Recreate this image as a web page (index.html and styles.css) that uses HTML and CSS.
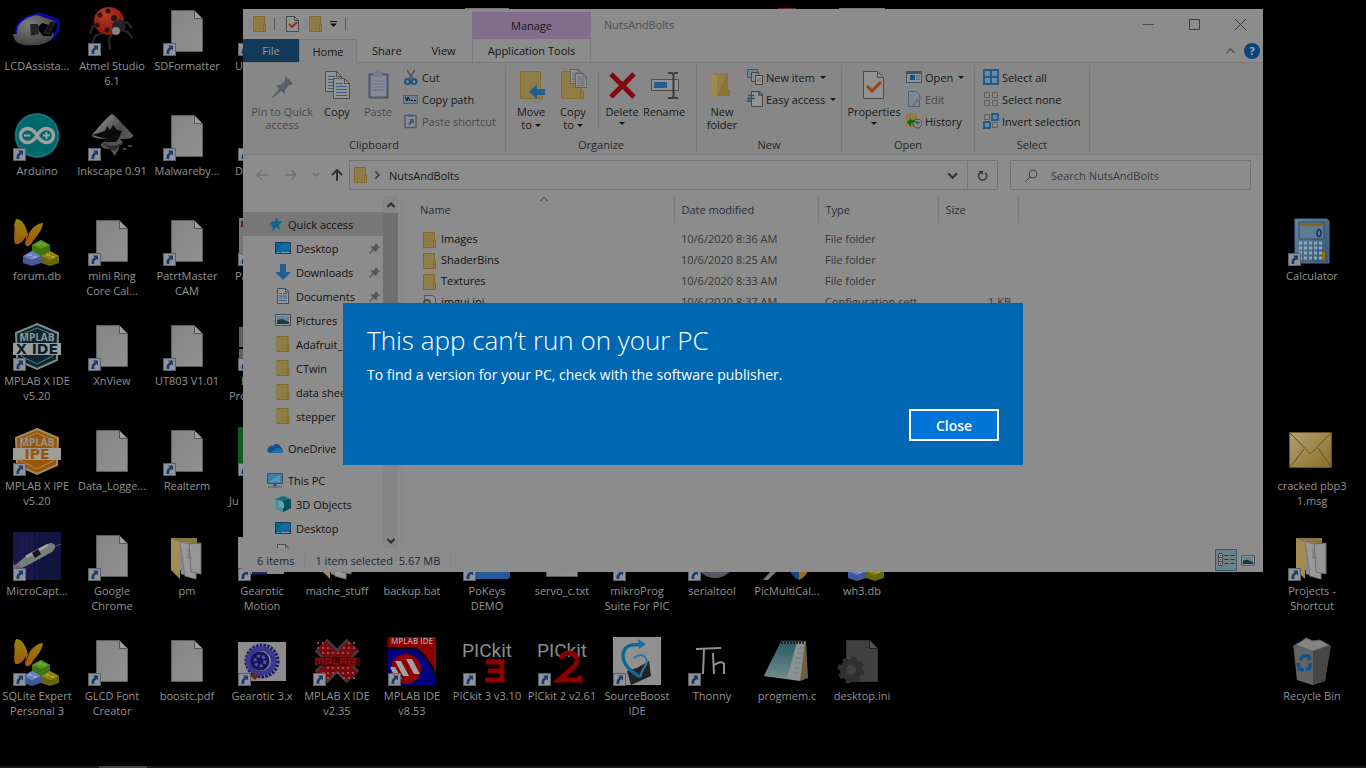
FILE: index.html
```html
<!DOCTYPE html>
<html lang="en">
<head>
<meta charset="utf-8">
<title>Desktop</title>
<link rel="stylesheet" href="styles.css">
</head>
<body>
<svg class="defs" aria-hidden="true">
  <defs>
    <linearGradient id="g-paper" x1="0" y1="0" x2="1" y2="1"><stop offset="0" stop-color="#848484"/><stop offset="1" stop-color="#919191"/></linearGradient>
    <linearGradient id="g-wing" x1="0" y1="0" x2="0" y2="1"><stop offset="0" stop-color="#94860a"/><stop offset="1" stop-color="#a35410"/></linearGradient>
    <linearGradient id="g-ink" x1="0" y1="0" x2="1" y2="1"><stop offset="0" stop-color="#a0a0a0"/><stop offset=".5" stop-color="#4a4a4c"/><stop offset="1" stop-color="#6c7078"/></linearGradient>
    <linearGradient id="g-mail" x1="0" y1="0" x2="1" y2="1"><stop offset="0" stop-color="#b0a274"/><stop offset="1" stop-color="#8a6d25"/></linearGradient>
    <linearGradient id="g-calc" x1="0" y1="0" x2="1" y2="1"><stop offset="0" stop-color="#6888a4"/><stop offset="1" stop-color="#305474"/></linearGradient>
    <linearGradient id="g-note" x1="0" y1="0" x2="0" y2="1"><stop offset="0" stop-color="#2b5a61"/><stop offset="1" stop-color="#6d8b8e"/></linearGradient>
    <radialGradient id="g-bug" cx=".4" cy=".3" r=".8"><stop offset="0" stop-color="#b53a26"/><stop offset="1" stop-color="#7a1408"/></radialGradient>
    <radialGradient id="g-hand" cx=".4" cy=".3" r=".8"><stop offset="0" stop-color="#7c7c7c"/><stop offset="1" stop-color="#3c3c3c"/></radialGradient>
  </defs>
  <symbol id="arrow" viewBox="0 0 13 13"><path d="M0 0h13v13H0z" fill="#5c6066"/><path d="M1 1h11v11H1z" fill="#90949a"/><path d="M5 2.500h5v5l-1.600-1.600C6.600 7 6 8.600 6.400 11H3.600C3 8 4.200 5.800 6.600 4.200z" fill="#1c3a6c"/></symbol>
  <symbol id="doc" viewBox="0 0 48 48"><path d="M8.500 2.500h23l8 8v33h-31z" fill="url(#g-paper)" stroke="#5e5e5e"/><path d="M31.500 2.500v8h8z" fill="#a0a0a0" stroke="#555"/></symbol>
  <symbol id="butterfly" viewBox="0 0 48 48">
    <path d="M3 1C9 0 14 10 15 17c3-6 9-12 15-12-1 8-7 14-10 18-2 4-6 8-8 3l1-8c-2 4-6 9-10 8C-1 25 3 12 1 7z" fill="url(#g-wing)"/><path d="M16 15l-3 8" stroke="#3c2a10"/>
    <path d="M19 27l9-5 9 5v7l-9 4-9-4z" fill="#3d7410"/><path d="M19 27l9-5 9 5-9 4z" fill="#559522"/><path d="M24 25l3-1 3 1v2h-6zM29 28h4v-2h-4z" fill="#6aa83a"/>
    <path d="M10 38l9-5 9 5v7l-9 3-9-3z" fill="#43579b"/><path d="M10 38l9-5 9 5-9 4z" fill="#6c82bf"/><path d="M15 36h4v2h-4zM20 38h4v2h-4z" fill="#8da0d4"/>
    <path d="M28 38l9-5 9 5v7l-9 3-9-3z" fill="#6a6408"/><path d="M28 38l9-5 9 5-9 4z" fill="#8d850e"/><path d="M33 36h4v2h-4zM38 38h4v2h-4z" fill="#aaa035"/>
  </symbol>
  <symbol id="folder" viewBox="0 0 13 16"><path d="M.5.500h11v15H.500z" fill="#8f7c46" stroke="#836b26"/><path d="M10.500 8.500h2v7h-2z" fill="#947f3c" stroke="#836b26"/></symbol>
  <symbol id="open-folder" viewBox="0 0 48 48"><path d="M8 5h26v32H8z" fill="#8b7641"/><path d="M14 8l14 2v34l-10-3z" fill="#8a8a8a"/><path d="M17 9l16 3v34l-11-3z" fill="#999" stroke="#777"/><path d="M26 11l12-1v31l-10-2z" fill="#969696" stroke="#6c6c6c"/><path d="M8 5l9 5v36L8 37z" fill="#a18c52"/><path d="M25 15v10M24 25h5" stroke="#777"/></symbol>
  <symbol id="pin" viewBox="0 0 12 12"><path d="M7 0l5 5-1.500.5-2 2L8 10.500 5 8 1 12l-1-1 4-4-2.500-3L5 3.500l2-2z" fill="#50565e"/></symbol>
  <symbol id="monitor" viewBox="0 0 16 12"><path d="M.5.500h15v11H.500z" fill="#08629b" stroke="#153e5c"/><path d="M1 9l8-8h6v8z" fill="#14699f"/><path d="M2 10.500h2M6 10.500h8" stroke="#72a4c6"/></symbol>
  <symbol id="textdoc" viewBox="0 0 12 16"><path d="M.5.500h8l3 3v12H.500z" fill="#989898" stroke="#454d55"/><path d="M8.500 1v3h3" fill="none" stroke="#454d55"/><path d="M2 5.500h3M6 5.500h4M2 8h8M2 10h3M6 10h4M2 12.500h8" stroke="#27618c"/></symbol>
  <symbol id="picture" viewBox="0 0 16 12"><path d="M.5.500h15v11H.500z" fill="#979797" stroke="#4a4a4a"/><path d="M2 2h12v8H2z" fill="#62849c"/><path d="M2 6l5-1 7 3v2H2z" fill="#153d3f"/></symbol>
  <symbol id="bigfolder" viewBox="0 0 24 30"><path d="M.5.500h20v27H.500z" fill="#8f7c46" stroke="#866c25"/><path d="M19.500 20h3v8h-3z" fill="#947f3c" stroke="#866c25"/></symbol>
  <symbol id="lines" viewBox="0 0 17 21"><path d="M.5.500h11l5 5v15H.500z" fill="#939393" stroke="#4c4c4c"/><path d="M11.500.500v5h5" fill="none" stroke="#4c4c4c"/><path d="M3 5.500h7M3 8.500h11M3 11.500h11M3 14.500h11M3 17.500h11" stroke="#3c5c88"/></symbol>
</svg>

<main class="desktop" aria-label="Desktop">
  <div class="icon-row">
    <figure class="icon"><svg viewBox="0 0 48 48"><path d="M4 26C2 14 12 9 27 6l17 6c4 8-1 17-9 20-9 5-28 7-31-6z" fill="none" stroke="#0808a8" stroke-width="3"/><path d="M4 26C3 16 12 9 24 7l18 6-3 5-10-3-5 5 6 8h8l2-4 1 3c-4 8-12 10-20 10-10 1-20 0-21-11z" fill="url(#g-hand)"/><path d="M17 16h8l1 10-8 2z" fill="#242424"/><path d="M31 25l6-11 6-1-7 13z" fill="#151515" stroke="#444" stroke-width=".5"/></svg><figcaption>LCDAssista...</figcaption></figure>
    <figure class="icon"><svg viewBox="0 0 48 48"><path d="M12 20L5 18l-3 8M16 24l-9 4-3 9M25 24l-4 7 1 11M33 17l6-3 5 6M32 22l8 2 4 6" fill="none" stroke="#292929" stroke-width="2"/><ellipse cx="21" cy="13" rx="15" ry="14" fill="url(#g-bug)"/><g fill="#301010"><circle cx="20" cy="3" r="2.500"/><circle cx="12" cy="7" r="2.500"/><circle cx="9" cy="17" r="2.500"/><circle cx="26" cy="10" r="3"/><circle cx="19" cy="22" r="2.500"/></g><ellipse cx="31" cy="18" rx="7" ry="6" fill="#252527"/><circle cx="28" cy="23" r="4" fill="#858585"/></svg><svg class="badge"><use href="#arrow"/></svg><figcaption>Atmel Studio 6.1</figcaption></figure>
    <figure class="icon"><svg><use href="#doc"/></svg><svg class="badge"><use href="#arrow"/></svg><figcaption>SDFormatter</figcaption></figure>
    <figure class="icon cut"><svg></svg><svg class="badge"><use href="#arrow"/></svg><figcaption>U</figcaption></figure>
    <figure class="icon"></figure>
    <figure class="icon"></figure>
    <figure class="icon"><svg viewBox="0 0 48 48"><path d="M2 0h44v12H2z" fill="#777"/></svg></figure>
    <figure class="icon"></figure>
    <figure class="icon"></figure>
    <figure class="icon"></figure>
    <figure class="icon"><svg viewBox="0 0 48 48"><path d="M15 0h18v12H15z" fill="#64281c"/></svg></figure>
    <figure class="icon"><svg viewBox="0 0 48 48"><path d="M1 0h46v12H1z" fill="#777"/></svg></figure>
  </div>
  <div class="icon-row">
    <figure class="icon"><svg viewBox="0 0 48 48"><circle cx="24" cy="22.500" r="22.500" fill="#02686c"/><circle cx="24" cy="22.500" r="21" fill="none" stroke="#257e80"/><path d="M24 22.500c-4-7-8-7-9.500-7a7 7 0 0 0 0 14c1.500 0 5.500 0 9.500-7zm0 0c4 7 8 7 9.500 7a7 7 0 0 0 0-14c-1.500 0-5.500 0-9.500 7z" fill="none" stroke="#a0a0a0" stroke-width="3.500"/><path d="M11 22.500h6M30 22.500h7M33.500 19v7" stroke="#a0a0a0" stroke-width="2"/></svg><svg class="badge"><use href="#arrow"/></svg><figcaption>Arduino</figcaption></figure>
    <figure class="icon"><svg viewBox="0 0 48 48"><path d="M24 1c2 0 18 18 21 21 1 3-5 4-12 4-3 1 4 2 1 5-2 2-4 2-3 5-2 2-3 4-4 7l-5-7c-6 0-10-2-9-5l6-5c-8 0-15-1-15-4C8 17 20 3 24 1z" fill="url(#g-ink)"/><path d="M4 22l13-4 2-5 3 4 3-5 4 5 5 1-3 7-3 4H16l3-3z" fill="#0c0c0c"/><path d="M14 30c8 4 14 3 20 0l-7 8-5-2z" fill="#2c2c2e"/><path d="M40 33h4M35 36h3" stroke="#444" stroke-width="2"/></svg><svg class="badge"><use href="#arrow"/></svg><figcaption>Inkscape 0.91</figcaption></figure>
    <figure class="icon"><svg><use href="#doc"/></svg><svg class="badge"><use href="#arrow"/></svg><figcaption>Malwareby...</figcaption></figure>
    <figure class="icon cut"><svg></svg><svg class="badge"><use href="#arrow"/></svg><figcaption>D</figcaption></figure>
  </div>
  <div class="icon-row">
    <figure class="icon"><svg><use href="#butterfly"/></svg><figcaption>forum.db</figcaption></figure>
    <figure class="icon"><svg><use href="#doc"/></svg><svg class="badge"><use href="#arrow"/></svg><figcaption>mini Ring<br>Core Cal...</figcaption></figure>
    <figure class="icon"><svg><use href="#doc"/></svg><svg class="badge"><use href="#arrow"/></svg><figcaption>PatrtMaster CAM</figcaption></figure>
    <figure class="icon cut"><svg viewBox="0 0 48 48"><path d="M1 0h40v46H1z" fill="#777"/><path d="M3 3h20v6H3z" fill="#701438"/></svg><svg class="badge"><use href="#arrow"/></svg><figcaption>Pa</figcaption></figure>
    <figure class="icon side"><svg viewBox="0 0 48 48"><path d="M7 1h32l2 2v42H9l-2-2z" fill="url(#g-calc)" stroke="#54718a"/><path d="M11 4h25v17H11z" fill="#5e7d95" stroke="#2e4b68"/><path d="M12 5h23v3H12z" fill="#995f10"/><path d="M11 25h25M11 30h25M11 35h25M11 40h25" stroke="#8fa4b4" stroke-width="3" stroke-dasharray="3 2"/><path d="M34 34h3v8h-3z" fill="#a8650c"/><ellipse cx="31" cy="15" rx="2" ry="3.500" fill="none" stroke="#182b58" stroke-width="1.500"/></svg><svg class="badge"><use href="#arrow"/></svg><figcaption>Calculator</figcaption></figure>
  </div>
  <div class="icon-row">
    <figure class="icon"><svg viewBox="0 0 48 48" class="logo"><path d="M24 1l21 9-1 27-20 9-20-9L3 10z" fill="#0a2730" stroke="#7f8a8d" stroke-width="2"/><path d="M24 5l16 7v21l-16 8-16-8V12z" fill="none" stroke="#66777c"/><path d="M0 20h48v12H0z" fill="#9b9e9f"/><text x="24" y="18" class="logo-s">MPLAB</text><text x="24" y="31" class="logo-d" fill="#0a2028">X IDE</text></svg><svg class="badge"><use href="#arrow"/></svg><figcaption>MPLAB X IDE v5.20</figcaption></figure>
    <figure class="icon"><svg><use href="#doc"/></svg><svg class="badge"><use href="#arrow"/></svg><figcaption>XnView</figcaption></figure>
    <figure class="icon"><svg><use href="#doc"/></svg><svg class="badge"><use href="#arrow"/></svg><figcaption>UT803 V1.01</figcaption></figure>
    <figure class="icon cut deep"><svg viewBox="0 0 48 48"><path d="M1 4h40v20H1zM1 26h40v14H1z" fill="#606060"/></svg><svg class="badge"><use href="#arrow"/></svg><figcaption><span>N</span><br>Pro</figcaption></figure>
  </div>
  <div class="icon-row">
    <figure class="icon"><svg viewBox="0 0 48 48" class="logo"><path d="M24 1l21 9-1 27-20 9-20-9L3 10z" fill="#9a5806" stroke="#a38960" stroke-width="2"/><path d="M24 5l16 7v21l-16 8-16-8V12z" fill="none" stroke="#a98d66"/><path d="M0 20h48v12H0z" fill="#a09d98"/><text x="24" y="18" class="logo-s">MPLAB</text><text x="24" y="31" class="logo-d" fill="#995606">IPE</text></svg><svg class="badge"><use href="#arrow"/></svg><figcaption>MPLAB X IPE v5.20</figcaption></figure>
    <figure class="icon"><svg><use href="#doc"/></svg><figcaption>Data_Logge...</figcaption></figure>
    <figure class="icon"><svg><use href="#doc"/></svg><svg class="badge"><use href="#arrow"/></svg><figcaption>Realterm</figcaption></figure>
    <figure class="icon cut deep"><svg viewBox="0 0 48 48"><path d="M0-1h48v48H0z" fill="#135c1c"/></svg><svg class="badge"><use href="#arrow"/></svg><figcaption><br>Ju</figcaption></figure>
    <figure class="icon side"><svg viewBox="0 0 48 48"><path d="M1.500 4.500h42v35h-42z" fill="url(#g-mail)" stroke="#63522b"/><path d="M2 5l20.500 21L43 5M2 39l14-18M43 39L30 20" fill="none" stroke="#65512a"/></svg><figcaption>cracked pbp3 1.msg</figcaption></figure>
  </div>
  <div class="icon-row">
    <figure class="icon"><svg viewBox="0 0 48 48"><path d="M0-1h48v48H0z" fill="#101540"/><path d="M0 0h20v47H0z" fill="#1d1648"/><path d="M9 0v47M14 0v47M19 0v47M24 0v47" stroke="#211f59"/><path d="M0 34l13-11L37 10q6 0 5 5l-3 4-22 12-10 5z" fill="#777d7d"/><path d="M13 24l22-12" stroke="#a0a0a0" stroke-width="3"/><path d="M19 20l6-4 3 5-6 4z" fill="#1d1110"/><path d="M42 13l6-2" stroke="#555"/><path d="M0 31l10 3-8 5H0z" fill="#765e75"/></svg><svg class="badge"><use href="#arrow"/></svg><figcaption>MicroCapt...</figcaption></figure>
    <figure class="icon"><svg><use href="#doc"/></svg><svg class="badge"><use href="#arrow"/></svg><figcaption>Google Chrome</figcaption></figure>
    <figure class="icon"><svg><use href="#open-folder"/></svg><figcaption>pm</figcaption></figure>
    <figure class="icon"><svg viewBox="0 0 48 48"><path d="M0 4h46v37H0z" fill="#8c8c8c"/><path d="M14 40h15" stroke="#222460" stroke-width="3"/></svg><svg class="badge"><use href="#arrow"/></svg><figcaption>Gearotic Motion</figcaption></figure>
    <figure class="icon"><svg><use href="#open-folder"/></svg><figcaption>mache_stuff</figcaption></figure>
    <figure class="icon"><svg></svg><figcaption>backup.bat</figcaption></figure>
    <figure class="icon"><svg viewBox="0 0 48 48"><rect x="1" y="20" width="46" height="26" rx="3" fill="#245b96"/></svg><svg class="badge"><use href="#arrow"/></svg><figcaption>PoKeys<br>DEMO</figcaption></figure>
    <figure class="icon"><svg><use href="#doc"/></svg><figcaption>servo_c.txt</figcaption></figure>
    <figure class="icon"><svg></svg><svg class="badge"><use href="#arrow"/></svg><figcaption>mikroProg Suite For PIC</figcaption></figure>
    <figure class="icon"><svg viewBox="0 0 48 48"><circle cx="27" cy="25" r="20" fill="#555966"/></svg><svg class="badge"><use href="#arrow"/></svg><figcaption>serialtool</figcaption></figure>
    <figure class="icon"><svg viewBox="0 0 48 48"><path d="M0 47l14-16h7L5 47z" fill="#777"/><path d="M26 34h10v13q-8-3-10-13z" fill="#174986"/><path d="M36 34h10q-2 10-10 13z" fill="#9b7210"/></svg><figcaption>PicMultiCal...</figcaption></figure>
    <figure class="icon"><svg><use href="#butterfly"/></svg><figcaption>wh3.db</figcaption></figure>
    <figure class="icon side"><svg><use href="#open-folder"/></svg><svg class="badge"><use href="#arrow"/></svg><figcaption>Projects - Shortcut</figcaption></figure>
  </div>
  <div class="icon-row">
    <figure class="icon"><svg><use href="#butterfly"/></svg><svg class="badge"><use href="#arrow"/></svg><figcaption>SQLite Expert Personal 3</figcaption></figure>
    <figure class="icon"><svg><use href="#doc"/></svg><svg class="badge"><use href="#arrow"/></svg><figcaption>GLCD Font Creator</figcaption></figure>
    <figure class="icon"><svg><use href="#doc"/></svg><figcaption>boostc.pdf</figcaption></figure>
    <figure class="icon"><svg viewBox="0 0 48 48"><path d="M0 4h48v39H0z" fill="#8c8c8c"/><circle cx="24" cy="23" r="15.500" fill="none" stroke="#191b6c" stroke-width="4" stroke-dasharray="2.500 1.200"/><circle cx="23" cy="23" r="12.500" fill="none" stroke="#38398c" stroke-width="5"/><circle cx="22" cy="23" r="9.500" fill="#12145c"/><circle cx="22" cy="23" r="5" fill="none" stroke="#5455a0" stroke-width="3" stroke-dasharray="3 2"/><path d="M12 38l4-3 5 3-4 4z" fill="#6d2a14"/></svg><svg class="badge"><use href="#arrow"/></svg><figcaption>Gearotic 3.x</figcaption></figure>
    <figure class="icon"><svg viewBox="0 0 48 48"><g fill="none" stroke-linejoin="round"><path d="M8 7l32 32M40 7L8 39" stroke="#3e3e3e" stroke-width="18"/><path d="M8 7l32 32M40 7L8 39" stroke="#730d12" stroke-width="13"/><g stroke="#a8434a" stroke-width="2" stroke-dasharray="2 3"><path d="M4 5h9M35 5h9M4 10h14M30 10h14M9 15h30M14 30h22M9 35h32M4 40h14M30 40h14"/></g></g><path d="M2 19h45v9H2z" fill="#430407"/><path d="M3 27v-6h7v6M6.500 21v5M13 27v-6h5v4h-4M21 21v5h5M28 27v-6h5v6M28 24h5M36 21v6h6v-6zM36 24h6" fill="none" stroke="#900f12" stroke-width="1.500"/></svg><svg class="badge"><use href="#arrow"/></svg><figcaption>MPLAB X IDE v2.35</figcaption></figure>
    <figure class="icon"><svg viewBox="0 0 48 48" class="logo"><path d="M0-1h48v48H0z" fill="#8c0000"/><path d="M0 10h27c8 4 16 15 21 28v9H0z" fill="#00007f"/><path d="M0 10h28q13 9 20 28" fill="none" stroke="#080808" stroke-width="2"/><circle cx="18" cy="31" r="15" fill="#8c0000"/><path d="M7 23h6l8 15h-6zM18 21h6l8 15h-6zM2 29h5l7 12H8z" fill="#a0a0a0"/><text x="24" y="6" class="logo-p">MPLAB IDE</text></svg><svg class="badge"><use href="#arrow"/></svg><figcaption>MPLAB IDE v8.53</figcaption></figure>
    <figure class="icon"><svg viewBox="0 0 48 48" class="logo"><text x="24" y="19" class="logo-k">PICkit</text><path d="M23 24h16v18H22M25 33h14" fill="none" stroke="#8c0000" stroke-width="5"/></svg><svg class="badge"><use href="#arrow"/></svg><figcaption>PICkit 3 v3.10</figcaption></figure>
    <figure class="icon"><svg viewBox="0 0 48 48" class="logo"><text x="24" y="19" class="logo-k">PICkit</text><path d="M23 21q2-6 9-6 11 3 5 13L21 42h21v-4" fill="none" stroke="#8c0000" stroke-width="5"/></svg><svg class="badge"><use href="#arrow"/></svg><figcaption>PICkit 2 v2.61</figcaption></figure>
    <figure class="icon"><svg viewBox="0 0 48 48"><path d="M0-1h48v48H0z" fill="#909090"/><path d="M14 33l10-3 12-7 2 15-20 9z" fill="#222"/><path d="M27 39C14 31 6 21 12 11 16 5 22 8 27 6" fill="none" stroke="#0a679c" stroke-width="3.500"/><path d="M25 1l8 5-7 5z" fill="#14719f"/><path d="M28 39c-2-7 9-12 5-19-3-4-8-4-12 0" fill="none" stroke="#2a7ba6" stroke-width="2"/></svg><svg class="badge"><use href="#arrow"/></svg><figcaption>SourceBoost IDE</figcaption></figure>
    <figure class="icon"><svg viewBox="0 0 48 48"><path d="M8 11l25-1M16 11l-1 25M25 15l1 21M26 27q8-5 10-1v10" fill="none" stroke="#909090" stroke-width="2"/></svg><svg class="badge"><use href="#arrow"/></svg><figcaption>Thonny</figcaption></figure>
    <figure class="icon"><svg viewBox="0 0 48 48"><path d="M18 3h25l2 37-8 3z" fill="#6f5f3e"/><path d="M18 4h24L37 43 1 38z" fill="#8c9292"/><path d="M18 4h16L24 40 1 38z" fill="url(#g-note)"/><path d="M18 4h24" stroke="#242424" stroke-width="4" stroke-dasharray="2 1"/><path d="M35 10h6M34 15h6M33 20h6M32 25h6M31 30h6M30 35h6" stroke="#747b7b"/></svg><figcaption>progmem.c</figcaption></figure>
    <figure class="icon"><svg viewBox="0 0 48 48"><path d="M8.500 2.500h23l8 8v33h-31z" fill="#414141" stroke="#343434"/><path d="M31.500 2.500v8h8" fill="#555" stroke="#222"/><circle cx="13" cy="32" r="8" fill="none" stroke="#303030" stroke-width="6"/><circle cx="13" cy="32" r="11.500" fill="none" stroke="#303030" stroke-width="4" stroke-dasharray="5 4.030"/></svg><figcaption>desktop.ini</figcaption></figure>
    <figure class="icon side"><svg viewBox="0 0 48 48"><path d="M5 7l38 0-6 36-12 4-16-5z" fill="#505050"/><path d="M6 8l19 5v34L9 42z" fill="#636363"/><path d="M25 13l17-6-5 36-12 4z" fill="#464646"/><path d="M7 7l7-4 4-3 7 3 7-1 9 5-16 6z" fill="#858585" stroke="#626262"/><path d="M12 22l3-4h5l2 4M10 25l1 6 5 1M23 25l-2 6h-3" fill="none" stroke="#0c5490" stroke-width="3.500"/></svg><figcaption>Recycle Bin</figcaption></figure>
  </div>
</main>

<section class="window" aria-label="NutsAndBolts">
  <header class="frame-head">
    <div class="quick"><svg class="f16"><use href="#folder"/></svg><i class="bar"></i><svg class="f16 chk" viewBox="0 0 13 16"><path d="M.5.500h8l4 4v11H.500z" fill="#939393" stroke="#484848"/><path d="M8.500.500v4h4" fill="none" stroke="#484848"/><path d="M3 8l3 3 5-5" fill="none" stroke="#913216" stroke-width="2"/></svg><svg class="f16"><use href="#folder"/></svg><svg class="drop" viewBox="0 0 7 6"><path d="M0 .5h7" stroke="#111"/><path d="M0 2.500h7L3.500 6z" fill="#111"/></svg><i class="bar"></i></div>
    <nav class="tabs"><button class="tab file">File</button><button class="tab home">Home</button><button class="tab">Share</button><button class="tab">View</button></nav>
    <div class="manage">Manage</div>
    <button class="tab tools">Application Tools</button>
    <div class="caption"><span>NutsAndBolts</span>
      <button aria-label="Minimize"><svg viewBox="0 0 11 11"><path d="M0 5.500h11" stroke="#4c4c4c"/></svg></button>
      <button aria-label="Maximize"><svg viewBox="0 0 11 11"><path d="M.5.500h10v10H.500z" fill="none" stroke="#3c3c3c"/></svg></button>
      <button aria-label="Close window"><svg viewBox="0 0 11 11"><path d="M0 0l11 11M11 0L0 11" stroke="#3c3c3c"/></svg></button></div>
    <div class="help"><button aria-label="Collapse ribbon"><svg width="9" height="6" viewBox="0 0 9 6"><path d="M.5 5l4-4 4 4" fill="none" stroke="#555" stroke-width="1.500"/></svg></button><button class="q" aria-label="Help">?</button></div>
  </header>

  <div class="ribbon">
    <section class="group clipboard"><div class="tools-row">
      <button class="big off w66"><svg viewBox="0 0 32 32"><path d="M19 7l8 7-2 2-2 0-4 5 0 4-4-3-8 7-1-1 7-8-3-4 4 0 5-4 0-3z" fill="#59606b"/></svg><span>Pin to Quick access</span></button>
      <button class="big w40"><svg viewBox="0 0 32 32"><use href="#lines" x="4" y="2" width="17" height="21"/><use href="#lines" x="12" y="9" width="17" height="21"/></svg><span>Copy</span></button>
      <button class="big off"><svg viewBox="0 0 32 32"><path d="M7.500 5.500h18v23h-18z" fill="#848b98" stroke="#4b566b" stroke-width="2"/><path d="M11 3h3q2-4 4 0h3v5H11z" fill="#777d86"/><path d="M10 12h13M10 15h13M10 18h13M10 21h13" stroke="#71777f"/></svg><span>Paste</span></button>
      <div class="small-list">
        <button><svg viewBox="0 0 16 16"><path d="M4 1l6 9M12 1L6 10" stroke="#555" stroke-width="1.500"/><circle cx="4.500" cy="12.500" r="2.500" fill="none" stroke="#15587c" stroke-width="2"/><circle cx="11" cy="12.500" r="2.500" fill="none" stroke="#15587c" stroke-width="2"/></svg>Cut</button>
        <button><svg viewBox="0 0 16 16"><path d="M.5 4.500h14v8H.500z" fill="#66828f" stroke="#3d6678"/><path d="M2 6l2 4 1-4 2 4M8 9.500h2M11 9.500h2" stroke="#151515" fill="none"/></svg>Copy path</button>
        <button class="off"><svg viewBox="0 0 16 16"><path d="M2 2.500h11v12H2z" fill="#8a9097" stroke="#505b6c" stroke-width="1.500"/><path d="M5 1h5v3H5z" fill="#5b6470"/><path d="M6 6h5v5L9.500 9.500 7 12H5.500V9.500L7.500 7.500z" fill="#505b6c"/></svg>Paste shortcut</button>
      </div></div><h2>Clipboard</h2></section>
    <section class="group organize"><div class="tools-row">
      <button class="big"><svg viewBox="0 0 32 32"><use href="#bigfolder" x="5" y="2" width="24" height="30"/><path d="M30 20v6h-8v4l-8-7 8-8v5z" fill="#205f8f"/></svg><span>Move<br>to <b></b></span></button>
      <button class="big"><svg viewBox="0 0 32 32"><use href="#bigfolder" x="4" y="2" width="24" height="30"/><use href="#lines" x="13" y="0" width="12" height="15"/><use href="#lines" x="18" y="4" width="12" height="15"/></svg><span>Copy<br>to <b></b></span></button>
      <i class="split"></i>
      <button class="big"><svg viewBox="0 0 32 32"><path d="M5 5l23 23M28 5L5 28" stroke="#7e0910" stroke-width="5"/></svg><span>Delete <b class="below"></b></span></button>
      <button class="big"><svg viewBox="0 0 32 32"><path d="M3.500 10.500h27v11h-27z" fill="#929292" stroke="#4c4c4c"/><path d="M6 13h13v6H6z" fill="#20608f"/><path d="M20 4h4l1.500 1L27 4h3M25.500 5v23M20 29h4l1.500-1 1.500 1h3" fill="none" stroke="#3b3b3b" stroke-width="2"/></svg><span>Rename</span></button>
      </div><h2>Organize</h2></section>
    <section class="group new"><div class="tools-row">
      <button class="big"><svg viewBox="0 0 32 32"><path d="M6 4h15v16h3v7H6z" fill="#927d43"/><path d="M6 4l5 3v23l-5-3z" fill="#9e8950"/><path d="M21 4h1v16h2v7H12" fill="#8a7339"/></svg><span>New folder</span></button>
      <div class="small-list">
        <button><svg viewBox="0 0 16 16"><path d="M.5.500h10v8H.500z" fill="#6d8795" stroke="#2e5d76"/><path d="M4.500 3.500h7v9h-7z" fill="#8b8b8b" stroke="#444"/><path d="M8.500 6.500h7v9h-7z" fill="#999" stroke="#444"/><path d="M10 10h4M10 12h4" stroke="#666"/></svg>New item<b></b></button>
        <button><svg viewBox="0 0 16 16"><path d="M4.500.500h8l3 3v12h-11z" fill="#939393" stroke="#444"/><path d="M12 1v3h3M0 7.500h8M1 4.500h6M0 10h5" fill="none" stroke="#29546d" stroke-width="1.500"/></svg>Easy access<b></b></button>
      </div></div><h2>New</h2></section>
    <section class="group open"><div class="tools-row">
      <button class="big w56"><svg viewBox="0 0 32 32"><path d="M5.500 2.500h14l6 6v21h-20z" fill="#929292" stroke="#4b4b4b"/><path d="M19.500 2.500v6h6" fill="none" stroke="#4b4b4b"/><path d="M9 17l5 5 9-9" fill="none" stroke="#974315" stroke-width="3"/></svg><span>Properties <b class="below"></b></span></button>
      <div class="small-list">
        <button><svg viewBox="0 0 16 16"><path d="M.5 2.500h15v11H.500z" fill="#8c9297" stroke="#42515f"/><path d="M1 3h14v2H1z" fill="#44525f"/><path d="M4 6h5v5H4z" fill="#10558a"/><path d="M10 7h4M10 10h4" stroke="#555"/></svg>Open<b></b></button>
        <button class="off"><svg viewBox="0 0 16 16"><path d="M2.500.500h8l3 3v12h-11z" fill="#7e8895" stroke="#515f72"/><path d="M14 5l2 2-7 7-3 1 1-3z" fill="#667387"/></svg>Edit</button>
        <button><svg viewBox="0 0 16 16"><path d="M0 0h11v14H0z" fill="#8f7c46"/><circle cx="11.500" cy="10.500" r="4.500" fill="#888" stroke="#484848"/><path d="M11 8v3l3-2" fill="none" stroke="#333"/><path d="M1 9l4-4v2q4-1 5 2-3 0-5 2v3z" fill="#136718"/></svg>History</button>
      </div></div><h2>Open</h2></section>
    <section class="group select"><div class="tools-row">
      <div class="small-list">
        <button><svg viewBox="0 0 16 16"><path d="M1 1h14v14H1zM8 1v14M1 8h14" fill="#6d8999" stroke="#1f5d88" stroke-width="2"/></svg>Select all</button>
        <button><svg viewBox="0 0 16 16"><path d="M1.500 1.500h5v5h-5zM9.500 1.500h5v5h-5zM1.500 9.500h5v5h-5zM9.500 9.500h5v5h-5z" fill="none" stroke="#606060"/></svg>Select none</button>
        <button><svg viewBox="0 0 16 16"><path d="M1.500 1.500h5v5h-5zM9.500 9.500h5v5h-5z" fill="none" stroke="#606060"/><path d="M9 1h6v6H9zM1 9h6v6H1z" fill="#6d8999" stroke="#1f5d88" stroke-width="2"/></svg>Invert selection</button>
      </div></div><h2>Select</h2></section>
  </div>

  <div class="address-row">
    <button class="nav" aria-label="Back"><svg viewBox="0 0 12 12"><path d="M12 6H1M5.500 1.500L1 6l4.500 4.500" fill="none" stroke="#747474" stroke-width="1.500"/></svg></button>
    <button class="nav" aria-label="Forward"><svg viewBox="0 0 12 12"><path d="M0 6h11M6.500 1.500L11 6l-4.500 4.500" fill="none" stroke="#747474" stroke-width="1.500"/></svg></button>
    <button class="nav slim" aria-label="Recent"><svg viewBox="0 0 12 12"><path d="M3 4l3 3 3-3" fill="none" stroke="#707070" stroke-width="1.500"/></svg></button>
    <button class="nav slim" aria-label="Up"><svg viewBox="0 0 12 12"><path d="M6 12V1M1 6l5-5 5 5" fill="none" stroke="#333" stroke-width="2"/></svg></button>
    <div class="address"><svg class="f16"><use href="#folder"/></svg><svg class="chev" viewBox="0 0 5 8"><path d="M.5.500L4 4 .5 7.500" fill="none" stroke="#333" stroke-width="1.500"/></svg><button class="crumb">NutsAndBolts</button><button class="ab" aria-label="Previous locations"><svg viewBox="0 0 10 10"><path d="M1 3l4 4 4-4" fill="none" stroke="#333" stroke-width="2"/></svg></button><button class="ab reload" aria-label="Refresh"><svg viewBox="0 0 12 12"><path d="M9 3a4.500 4.500 0 1 1-5-.5" fill="none" stroke="#333" stroke-width="1.500"/><path d="M1.500 1h5v4.500z" fill="#333"/></svg></button></div>
    <label class="search"><svg viewBox="0 0 13 13"><circle cx="8" cy="5" r="4" fill="none" stroke="#444"/><path d="M5 8L.5 12.500" stroke="#444"/></svg><input type="search" placeholder="Search NutsAndBolts" aria-label="Search NutsAndBolts"></label>
  </div>

  <div class="content">
    <nav class="tree">
      <a href="#" class="root current"><svg viewBox="0 0 16 16"><path d="M9.500 1l1.500 4.500h4.500l-3.500 3.500 1 5L9.500 11.500 5 15l1-4H3l3-1.500H1L5 8H2l3-2.500h3z" fill="#16618f"/></svg>Quick access</a>
      <a href="#"><svg><use href="#monitor"/></svg>Desktop<svg class="pin"><use href="#pin"/></svg></a>
      <a href="#"><svg viewBox="0 0 16 16"><path d="M5 0h6v8h5l-8 8-8-8h5z" fill="#235f91"/></svg>Downloads<svg class="pin"><use href="#pin"/></svg></a>
      <a href="#"><svg><use href="#textdoc"/></svg>Documents<svg class="pin"><use href="#pin"/></svg></a>
      <a href="#"><svg><use href="#picture"/></svg>Pictures</a>
      <a href="#"><svg><use href="#folder"/></svg>Adafruit_</a>
      <a href="#"><svg><use href="#folder"/></svg>CTwin</a>
      <a href="#"><svg><use href="#folder"/></svg>data sheets</a>
      <a href="#"><svg><use href="#folder"/></svg>stepper</a>
      <a href="#" class="root apart"><svg viewBox="0 0 16 16"><path d="M3 13q-4-1-2-5 2-3 5-2 4-5 8 1 3 3 1 6z" fill="#124f88"/><path d="M3 13l7-5 5 1q2 2 0 4z" fill="#1b70ae"/></svg>OneDrive</a>
      <a href="#" class="root apart"><svg viewBox="0 0 16 16"><path d="M.5 1.500h15v10H.500z" fill="#3b7fa6" stroke="#38515f"/><path d="M2 10l11-7v7z" fill="#5994b5"/><path d="M7 12h2v2H7zM1 15h14" stroke="#4d5a66"/></svg>This PC</a>
      <a href="#"><svg viewBox="0 0 16 16"><path d="M0 3l8-3 8 3v9l-8 4-8-4z" fill="#137178"/><path d="M0 3l8 2v11l-8-4z" fill="#4b929b"/><path d="M8 5l8-2v9l-8 4z" fill="#06515c"/><path d="M4 5l5 2v5l-5-1z" fill="#6ba5aa"/></svg>3D Objects</a>
      <a href="#"><svg><use href="#monitor"/></svg>Desktop</a>
      <a href="#"><svg><use href="#textdoc"/></svg>Documents</a>
    </nav>
    <div class="scroll" aria-hidden="true"><svg viewBox="0 0 8 6"><path d="M.5 5L4 1.500 7.500 5" fill="none" stroke="#2b2b2b" stroke-width="2"/></svg><i></i><svg viewBox="0 0 8 6"><path d="M.5 1L4 4.500 7.500 1" fill="none" stroke="#2b2b2b" stroke-width="2"/></svg></div>
    <div class="files">
      <table>
        <thead><tr><th class="name">Name<svg class="sort" viewBox="0 0 8 5"><path d="M.5 4L4 .5 7.500 4" fill="none" stroke="#333"/></svg></th><th class="date">Date modified</th><th class="type">Type</th><th class="size">Size</th></tr></thead>
        <tbody>
          <tr><td><svg><use href="#folder"/></svg>Images</td><td>10/6/2020 8:36 AM</td><td>File folder</td><td></td></tr>
          <tr><td><svg><use href="#folder"/></svg>ShaderBins</td><td>10/6/2020 8:25 AM</td><td>File folder</td><td></td></tr>
          <tr><td><svg><use href="#folder"/></svg>Textures</td><td>10/6/2020 8:33 AM</td><td>File folder</td><td></td></tr>
          <tr><td><svg viewBox="0 0 13 16"><path d="M1.500.500h8l3 3v12h-11z" fill="#929292" stroke="#555"/><circle cx="4" cy="8" r="3" fill="none" stroke="#4b4b4b" stroke-width="2"/></svg>imgui.ini</td><td>10/6/2020 8:37 AM</td><td>Configuration sett...</td><td>1 KB</td></tr>
        </tbody>
      </table>
    </div>
  </div>

  <footer class="status"><span>6 items</span><span>1 item selected&nbsp; 5.67 MB</span>
    <button class="view on" aria-label="Details view"><svg viewBox="0 0 18 14"><path d="M1.500.500h4v4h-4zM1.500 4.500h4v4h-4zM1.500 8.500h4v4h-4z" fill="#999" stroke="#444"/><path d="M7.500 2.500h4M13.500 2.500h4M7.500 6.500h4M13.500 6.500h4M7.500 10.500h4M13.500 10.500h4M3 2.500h1M3 6.500h1M3 10.500h1" stroke="#26343b"/></svg></button>
    <button class="view" aria-label="Large icons"><svg class="pic"><use href="#picture"/></svg></button></footer>
</section>

<div class="taskbar"><i></i></div>

<div class="dialog" role="alertdialog" aria-labelledby="dlg-title" aria-describedby="dlg-text">
  <h1 id="dlg-title">This app can’t run on your PC</h1>
  <p id="dlg-text">To find a version for your PC, check with the software publisher.</p>
  <button>Close</button>
</div>
</body>
</html>
```

FILE: styles.css
```css
* { box-sizing: border-box; }
body {
  margin: 0; height: 100vh; overflow: hidden; position: relative;
  background: #000; color: #151515;
  font: 11px/15px "Open Sans", "Noto Sans", sans-serif;
}
button, input { font: inherit; color: inherit; background: none; border: 0; padding: 0; }
i, b { display: block; flex: none; }
svg { display: block; flex: none; }
a { color: inherit; text-decoration: none; }
.defs { position: absolute; width: 0; height: 0; }

/* Desktop icons */
.desktop { padding: 8px 17px 0 0; }
.icon-row { display: flex; gap: 1px; height: 105px; }
.icon { margin: 0; width: 74px; flex: none; position: relative; }
.icon > svg { width: 48px; height: 48px; margin: 0 auto 2px; overflow: visible; }
.icon > .badge { position: absolute; left: 13px; top: 35px; width: 13px; height: 13px; margin: 0; }
.icon figcaption { color: #929292; text-align: center; }
.icon.cut figcaption { text-align: left; padding-left: 10px; }
.icon.deep figcaption { padding-left: 4px; }
.icon.deep span { padding-left: 12px; }
.icon.side { margin-left: auto; }
.logo text { text-anchor: middle; font-family: "Open Sans", sans-serif; font-weight: 700; }
.logo-s { font-size: 10px; fill: #8f9698; }
.logo .logo-d { font-size: 14px; font-family: "DejaVu Sans", sans-serif; }
.logo .logo-p { font-size: 8px; fill: #a0a0a0; font-weight: 600; }
.logo .logo-k { font-size: 19px; fill: #8c8c8c; font-weight: 400; font-family: Roboto, sans-serif; }

/* Explorer window */
.window {
  position: absolute; top: 9px; right: 103px; bottom: 196px; left: 243px;
  display: flex; flex-direction: column; background: #8c8c8c; overflow: hidden;
}
.frame-head { display: grid; grid-template: 30px 23px / 229px 119px 1fr; }
.quick { display: flex; align-items: center; padding-left: 10px; }
.f16 { width: 13px; height: 16px; }
.bar { width: 1px; height: 12px; background: #555; margin: 0 11px 0 8px; }
.chk { margin-right: 10px; }
.drop { width: 7px; height: 6px; margin: 0 0 0 8px; }
.tabs { grid-row: 2; grid-column: 1; display: flex; }
.tab { padding: 0 15px; }
.tab.file { background: #10395a; color: #9c9c9c; width: 56px; }
.tab.home { background: #878787; border: 1px solid #7a7a7a; border-bottom: 0; width: 58px; margin-bottom: -1px; padding: 0; position: relative; z-index: 1; }
.manage { grid-area: 1 / 2; background: #836c8c; margin-top: 3px; display: grid; place-items: center; }
.tab.tools { grid-area: 2 / 2; padding: 0; border: solid #7e7e7e; border-width: 0 1px; white-space: nowrap; }
.caption { grid-area: 1 / 3; display: flex; align-items: center; color: #4e4e4e; }
.caption span { margin: 0 auto 0 13px; }
.caption button { width: 46px; height: 28px; display: grid; place-items: center; }
.caption svg { width: 11px; height: 11px; }
.help { grid-area: 2 / 3; display: flex; justify-content: flex-end; align-items: center; gap: 9px; padding-right: 3px; }
.q { width: 16px; height: 16px; border-radius: 50%; background: #0a447a; color: #9db0c0; font-weight: 700; }

.ribbon { display: flex; background: #878787; border: solid #7a7a7a; border-width: 1px 0; height: 93px; }
.group { border-right: 1px solid #7a7a7a; margin: 2px 0 1px; padding-top: 1px; display: flex; flex-direction: column; color: #181818; }
.clipboard { width: 263px; }
.organize { width: 191px; }
.new { width: 145px; }
.open { width: 133px; }
.select { width: 115px; }
.group h2 { margin: auto 0 0; font-size: 11px; font-weight: 400; line-height: 16px; text-align: center; color: #272727; }
.tools-row { display: flex; padding-left: 4px; }
.big { width: 42px; display: flex; flex-direction: column; align-items: center; line-height: 13px; padding-top: 3px; }
.big svg { width: 32px; height: 32px; margin-bottom: 4px; }
.big.w66 { width: 70px; }
.big.w66 span { width: 66px; }
.big.w40 { width: 40px; }
.big.w56 { width: 56px; }
.off { color: #484848; }
.ribbon b { display: inline-block; border: 3px solid transparent; border-top-color: #111; border-bottom: 0; vertical-align: 2px; }
.ribbon b.below { display: block; margin: 4px auto 0; width: 6px; }
.split { width: 1px; height: 58px; background: #797979; margin: 5px 2px 0 4px; }
.small-list { display: flex; flex-direction: column; align-items: flex-start; padding-left: 4px; }
.small-list button { height: 22px; display: flex; align-items: center; gap: 3px; white-space: nowrap; }
.small-list svg { width: 16px; height: 16px; }
.small-list b { margin-left: 2px; }

.address-row { display: flex; padding: 5px 12px 6px 4px; height: 41px; }
.nav { width: 29px; display: grid; place-items: center; }
.nav svg { width: 12px; height: 12px; }
.nav.slim { width: 21px; }
.address { flex: 1; display: flex; align-items: center; border: 1px solid #747474; margin: 0 12px 0 2px; padding-left: 4px; }
.chev { width: 5px; height: 8px; margin: 0 9px 0 8px; }
.crumb { margin-right: auto; }
.ab { width: 30px; align-self: stretch; display: grid; place-items: center; }
.ab svg { width: 11px; height: 11px; }
.reload { border-left: 1px solid #747474; }
.search { width: 241px; border: 1px solid #747474; display: flex; align-items: center; gap: 13px; padding-left: 14px; }
.search svg { width: 13px; height: 13px; }
.search input { flex: 1; min-width: 0; outline: 0; }
.search input::placeholder { color: #3c3c3c; opacity: 1; }

.content { flex: 1; min-height: 0; display: flex; }
.tree { width: 140px; padding-top: 16px; overflow: hidden; color: #101010; }
.tree a { height: 24px; display: flex; align-items: center; padding-left: 32px; gap: 5px; position: relative; white-space: nowrap; }
.tree a > svg { width: 16px; height: 16px; }
.tree a.root { padding-left: 24px; }
.tree .current { background: #777; }
.tree .apart { margin-top: 8px; }
.tree a > .pin { width: 11px; height: 11px; margin: 0 3px 0 auto; }
.scroll { width: 15px; background: #868686; display: flex; flex-direction: column; align-items: center; justify-content: space-between; padding: 6px 0 4px; }
.scroll svg { width: 8px; height: 6px; }
.scroll i { width: 15px; height: 230px; margin: 5px 0 auto; background: #6f6f6f; }
.files { flex: 1; border-left: 1px solid #868686; margin-left: 3px; padding-left: 10px; overflow: hidden; }
table { border-collapse: collapse; table-layout: fixed; width: 606px; }
th { font-weight: 400; text-align: left; height: 27px; padding: 0 0 0 7px; color: #262e3a; border-right: 1px solid #7c7c7c; }
.name { width: 262px; position: relative; padding-left: 8px; }
.date { width: 144px; }
.type { width: 120px; }
.size { width: 80px; }
.sort { position: absolute; left: 128px; top: 1px; width: 8px; height: 5px; }
tbody::before { content: ""; display: block; height: 5px; }
td { height: 21px; line-height: 19px; padding: 0 7px; white-space: nowrap; overflow: hidden; color: #363636; }
td:first-child { color: #101010; padding-left: 11px; }
td:last-child { text-align: right; }
td svg { display: inline-block; width: 13px; height: 16px; vertical-align: middle; margin-right: 5px; }

.status { height: 24px; display: flex; align-items: center; padding: 0 4px 0 14px; color: #17263a; }
.status span { padding-right: 10px; margin-right: 10px; border-right: 1px solid #868686; }
.status span + span { margin-right: auto; }
.view { width: 22px; height: 22px; display: grid; place-items: center; }
.view.on { background: #6f8289; border: 1px solid #2d5c6d; }
.view svg { width: 18px; height: 14px; }
.view .pic { width: 14px; height: 11px; }

.taskbar { position: absolute; inset: auto 0 0 0; height: 2px; background: #1b1b1b; padding-left: 99px; }
.taskbar i { width: 48px; height: 2px; background: #444; }

/* Blocking message */
.dialog {
  position: absolute; top: 50%; left: 50%; transform: translate(-50%, -50%);
  width: 680px; max-width: 100%; padding: 21px 24px 24px;
  display: flex; flex-direction: column; background: #0067b3; color: #fff;
}
.dialog h1 { margin: 0; font-size: 26px; line-height: 32px; font-weight: 300; }
.dialog p { margin: 8px 0 23px; font-size: 14px; line-height: 22px; }
.dialog button { align-self: flex-end; width: 90px; height: 32px; border: 2px solid #fff; background: #0075d9; font-size: 14px; font-weight: 600; }
```
